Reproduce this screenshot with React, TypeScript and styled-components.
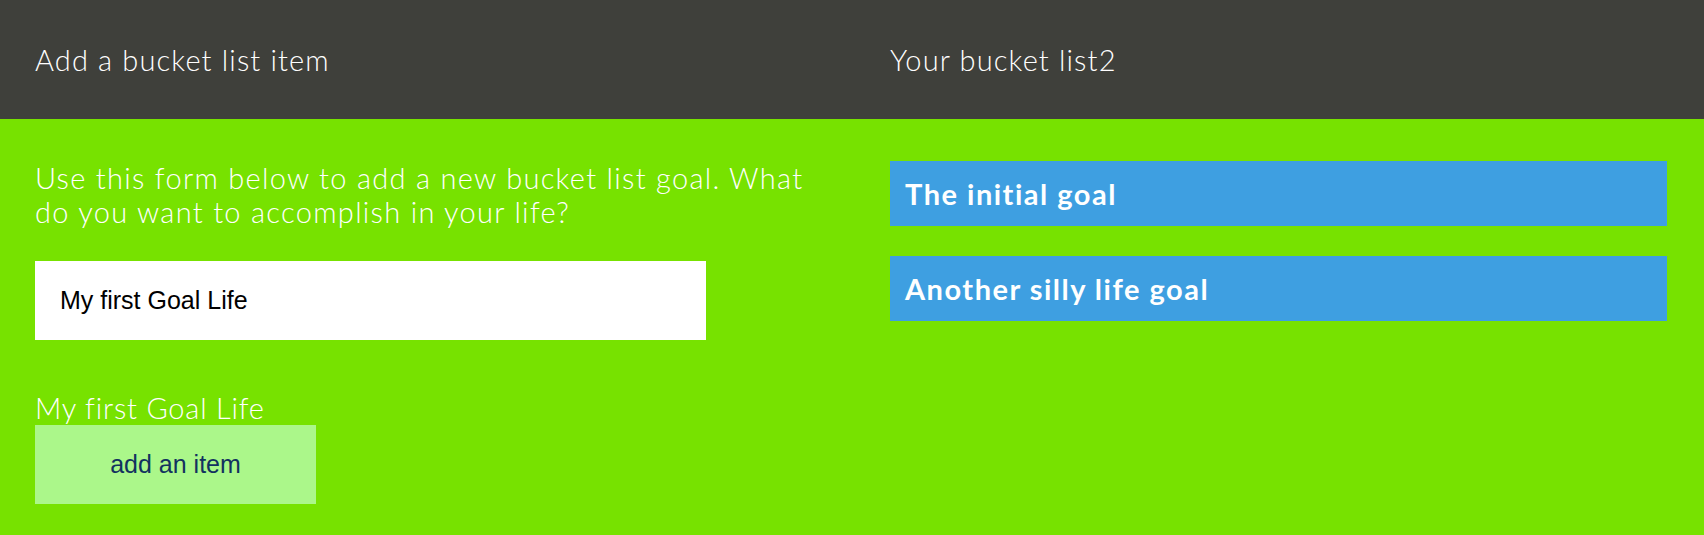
import React, { useState } from "react";
import styled, { createGlobalStyle } from "styled-components";

const GlobalStyle = createGlobalStyle`
  html, body {
    margin: 0;
    padding: 0;
    background: #77e200;
  }
  body {
    font-family: Lato, "Open Sans", sans-serif;
  }
  * { box-sizing: border-box; }
`;

const Page = styled.div`
  width: 1704px;
  min-height: 535px;
  background: #77e200;
`;

const Header = styled.header`
  display: grid;
  grid-template-columns: 852px 852px;
  height: 119px;
  background: #3f403b;
`;

const HeaderCell = styled.div<{ $side: "left" | "right" }>`
  display: flex;
  align-items: center;
  padding: ${(p) => (p.$side === "left" ? "0 35px" : "0 37px 0 38px")};
`;

const Title = styled.h1`
  margin: 0;
  font-family: Lato, "Open Sans", sans-serif;
  font-weight: 300;
  font-size: 29px;
  letter-spacing: 1.15px;
  line-height: 1;
  color: #ffffff;
`;

const Main = styled.main`
  display: grid;
  grid-template-columns: 852px 852px;
  align-items: start;
`;

const FormColumn = styled.section`
  display: flex;
  flex-direction: column;
  align-items: flex-start;
  padding: 42px 35px 0 35px;
`;

const Intro = styled.p`
  margin: 0;
  font-family: Lato, "Open Sans", sans-serif;
  font-weight: 300;
  font-size: 29px;
  letter-spacing: 1.3px;
  line-height: 34px;
  color: #ffffff;
`;

const GoalInput = styled.input`
  margin-top: 32px;
  width: 671px;
  height: 79px;
  padding: 0 25px;
  border: none;
  outline: none;
  background: #ffffff;
  font-family: "Liberation Sans", Arial, sans-serif;
  font-size: 25px;
  color: #000000;
`;

const Preview = styled.p`
  margin: 51px 0 0 0;
  font-family: Lato, "Open Sans", sans-serif;
  font-weight: 300;
  font-size: 29px;
  letter-spacing: 0.8px;
  line-height: 34px;
  color: #ffffff;
`;

const AddButton = styled.button`
  width: 281px;
  height: 79px;
  border: none;
  background: #abf78a;
  font-family: "Liberation Sans", Arial, sans-serif;
  font-size: 25px;
  color: #12325f;
  cursor: pointer;
`;

const ListColumn = styled.section`
  display: flex;
  flex-direction: column;
  gap: 30px;
  padding: 42px 37px 0 38px;
`;

const GoalItem = styled.div`
  display: flex;
  align-items: center;
  height: 65px;
  padding: 0 15px;
  background: #3e9fe1;
  font-family: Lato, "Open Sans", sans-serif;
  font-weight: 700;
  font-size: 29px;
  letter-spacing: 1.5px;
  color: #ffffff;
`;

export default function App() {
  const [value, setValue] = useState("My first Goal Life");
  const goals = ["The initial goal", "Another silly life goal"];
  return (
    <>
      <GlobalStyle />
      <Page>
        <Header>
          <HeaderCell $side="left">
            <Title>Add a bucket list item</Title>
          </HeaderCell>
          <HeaderCell $side="right">
            <Title>Your bucket list2</Title>
          </HeaderCell>
        </Header>
        <Main>
          <FormColumn>
            <Intro>
              Use this form below to add a new bucket list goal. What do you
              want to accomplish in your life?
            </Intro>
            <GoalInput value={value} onChange={(e) => setValue(e.target.value)} />
            <Preview>{value}</Preview>
            <AddButton>add an item</AddButton>
          </FormColumn>
          <ListColumn>
            {goals.map((g) => (
              <GoalItem key={g}>{g}</GoalItem>
            ))}
          </ListColumn>
        </Main>
      </Page>
    </>
  );
}
